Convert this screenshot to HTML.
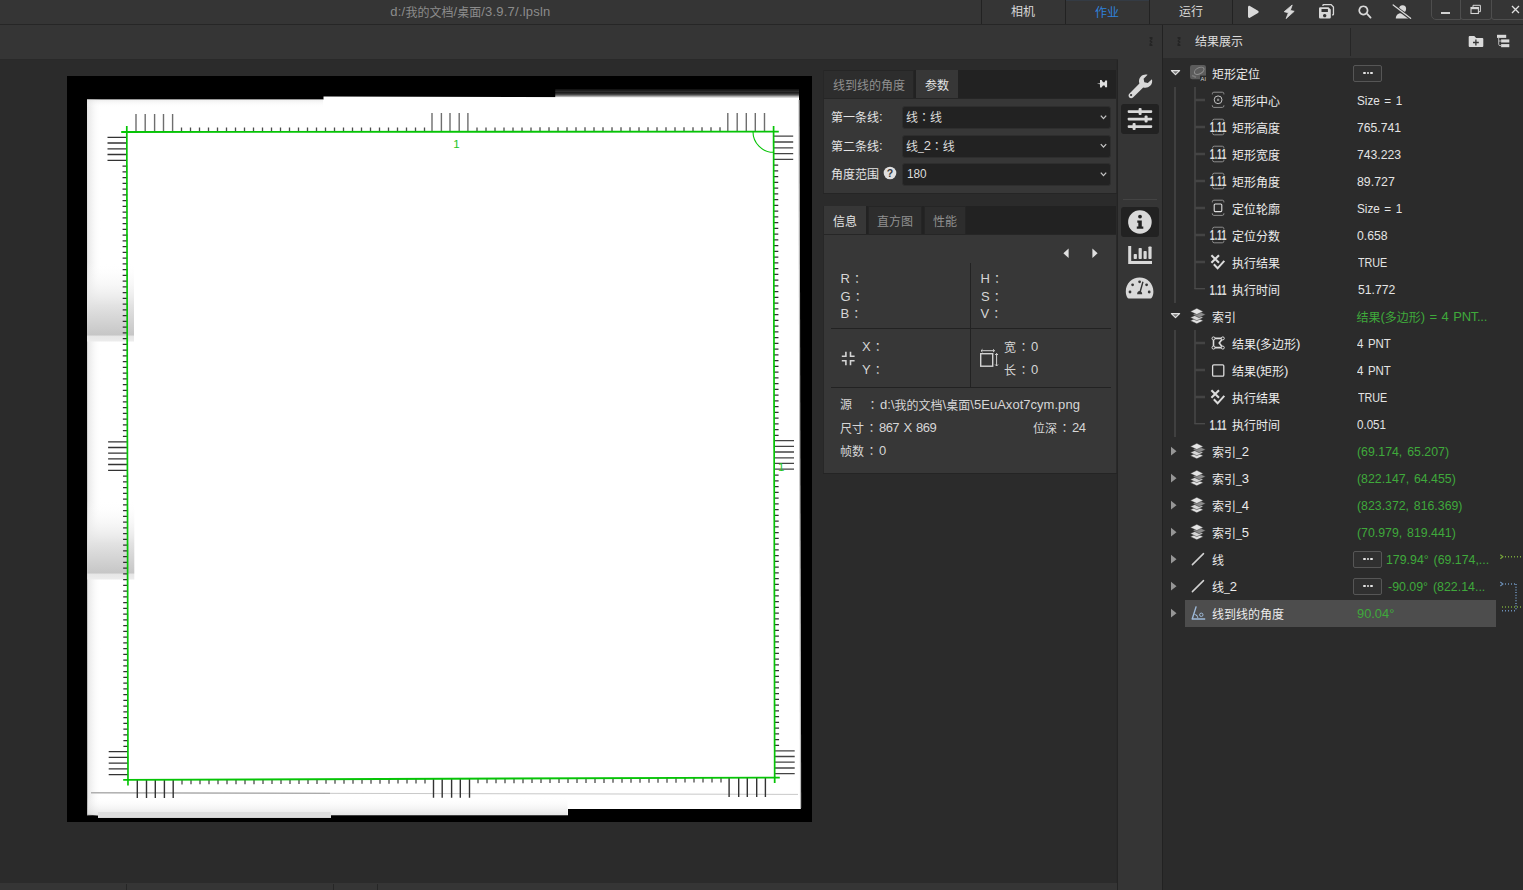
<!DOCTYPE html>
<html lang="zh-CN">
<head>
<meta charset="utf-8">
<title>线到线的角度</title>
<style>
*{box-sizing:border-box;margin:0;padding:0}
html,body{width:1523px;height:890px;overflow:hidden;background:#2b2b2b}
body{position:relative;font-family:"Liberation Sans","Noto Sans CJK SC",sans-serif;font-size:12px;color:#d6d6d6;line-height:16px}
.abs{position:absolute}
.l{font-size:13px;letter-spacing:-.45px;position:relative;top:-1px;word-spacing:1.500px}
.u{font-size:10.500px;letter-spacing:0;position:relative;top:1.200px}
.c{font-family:"Noto Sans CJK JP","Noto Sans CJK SC",sans-serif;margin:0 1.500px}
.t{position:absolute;white-space:nowrap;height:16px;line-height:16px}
#titlebar{left:0;top:0;width:1523px;height:24px;background:#353535}
#titleline{left:0;top:24px;width:1523px;height:1px;background:#262626}
#bar2{left:0;top:25px;width:1523px;height:34px;background:#353535}
#bar2line{left:0;top:59px;width:1118px;height:1px;background:#292929}
#sidebar{left:1118px;top:59px;width:44px;height:831px;background:#353535}
#rightpanel{left:1162px;top:25px;width:361px;height:865px;background:#2b2b2b;border-left:1px solid #222}
#rphead{left:1163px;top:25px;width:360px;height:33px;background:#353535}
#statusbar{left:0;top:883px;width:1117px;height:7px;background:#353535}
.sdiv{position:absolute;top:884px;width:1px;height:6px;background:#262626}
.tabbar{position:absolute;background:#222}
.panel{position:absolute;background:#373737}
.tab{position:absolute;height:28px;line-height:27px;text-align:center;color:#9a9a9a;background:#2d2d2d}
.tab.on{background:#373737;color:#e0e0e0}
.dd{position:absolute;left:902px;width:209px;height:23px;background:#222;border:1px solid #2e2e2e;border-radius:3px}
.hl{position:absolute;height:1px;background:#222}
.vl{position:absolute;width:1px;background:#222}
.nm{color:#ececec}
.vv{color:#e4e4e4}
.vv.g{color:#3fa93b}
.more{position:absolute;width:29px;height:17px;border:1px solid #565656;border-radius:2px;background:#303030}
.more i{position:absolute;top:5.800px;width:2.400px;height:2.400px;background:#e4e4e4;border-radius:1.200px}
.ico{position:absolute}
</style>
</head>
<body>
<!-- top bars -->
<div id="titlebar" class="abs"></div>
<div id="titleline" class="abs"></div>
<div id="bar2" class="abs"></div>
<div id="bar2line" class="abs"></div>
<div id="sidebar" class="abs"></div>
<div class="abs" style="left:1116px;top:60px;width:1px;height:823px;background:#292929"></div>
<div class="abs" style="left:1117px;top:60px;width:1px;height:830px;background:#242424"></div>
<div id="rightpanel" class="abs"></div>
<div id="rphead" class="abs"></div>
<div class="t" id="title" style="left:390.32px;top:5px;color:#8c8c8c"><span class="l" style="letter-spacing:0.212px">d:/</span>我的文档<span class="l" style="letter-spacing:0.212px">/</span>桌面<span class="l" style="letter-spacing:0.212px">/3.9.7/.lpsln</span></div>

<div class="vl" style="left:981px;top:0;height:24px"></div>
<div class="vl" style="left:1065px;top:0;height:24px"></div>
<div class="vl" style="left:1149px;top:0;height:24px"></div>
<div class="vl" style="left:1232px;top:0;height:24px"></div>
<div class="abs" style="left:1066px;top:0;width:83px;height:1px;background:#2f6fb5;opacity:.12"></div>
<div class="t" id="tt1" style="left:1011px;top:4.200px;color:#d8d8d8">相机</div>
<div class="t" id="tt2" style="left:1095px;top:5.200px;color:#2f82dc">作业</div>
<div class="t" id="tt3" style="left:1179px;top:4.200px;color:#d8d8d8">运行</div>
<!-- toolbar icons -->
<svg class="abs" style="left:1240px;top:0" width="180" height="24" viewBox="1240 0 180 24" fill="#d9d9d9">
  <!-- play -->
  <path d="M1248 7.2c0-1.1 1-1.7 1.9-1.2l8.1 4.8c.9.5.9 1.700 0 2.2l-8.1 4.800c-.9.500-1.900-.100-1.900-1.200z"/>
  <!-- bolt -->
  <path d="M1292.200 5l-8 6.700 4.200 1.100-2.300 5.800 8.100-7.300-3.900-.9z" stroke="#d9d9d9" stroke-width=".800" stroke-linejoin="round"/>
  <!-- save all -->
  <path d="M1320.300 7.300h8.200l2.300 2.300v7.700a1.300 1.300 0 0 1-1.300 1.300h-9.200a1.300 1.300 0 0 1-1.300-1.300v-8.700a1.300 1.300 0 0 1 1.300-1.300zm1.200 1.700v3.100h6.400v-3.100zm3.200 4.900a1.700 1.700 0 1 0 .01 0z" fill-rule="evenodd"/>
  <path d="M1322.300 5.900v-.5a1.300 1.300 0 0 1 1.300-1.300h7.800l2.700 2.700v7.500a1.300 1.300 0 0 1-1.300 1.300h-.7v-1.300h.7v-7l-2-2h-7.200v.6z"/>
  <!-- search -->
  <path d="M1363.400 5.400a5 5 0 1 0 .01 0zm0 1.700a3.300 3.300 0 1 1-.01 0z" fill-rule="evenodd"/>
  <path d="M1366.300 14.300l1.300-1.300 3.600 3.900a.9.900 0 0 1-1.300 1.300z"/>
  <!-- user slash -->
  <circle cx="1402.600" cy="8.700" r="3.500"/>
  <path d="M1395.800 18.600c0-3.200 2.200-5.300 4.800-5.300h3.600c2.600 0 4.800 2.100 4.800 5.300z"/>
  <path d="M1393.600 5.800l17 12.600" stroke="#353535" stroke-width="3.200" fill="none"/>
  <path d="M1393.200 5l17.400 13.300" stroke="#d9d9d9" stroke-width="1.300" fill="none" stroke-linecap="round"/>
</svg>
<!-- window controls -->
<div class="abs" style="left:1431px;top:-6px;width:30px;height:26px;border:1px solid #4e4e4e;border-radius:0 0 0 5px"></div>
<div class="abs" style="left:1460px;top:-6px;width:32px;height:26px;border:1px solid #4e4e4e;border-radius:0 0 3px 3px"></div>
<div class="abs" style="left:1491px;top:-6px;width:40px;height:26px;border:1px solid #4e4e4e;border-radius:0 0 0 3px"></div>
<div class="abs" style="left:1441px;top:12px;width:9px;height:2px;background:#d2d2d2"></div>
<svg class="abs" style="left:1468px;top:3px" width="16" height="14" viewBox="1468 3 16 14" fill="none" stroke="#d6d6d6">
  <path d="M1473 7v-1.700h7.400v6.400h-1.700" stroke-width="1"/>
  <rect x="1471" y="7.500" width="7.400" height="6" stroke-width="1.100"/>
  <rect x="1471" y="7" width="7.400" height="2.200" fill="#d6d6d6" stroke="none"/>
</svg>
<svg class="abs" style="left:1508px;top:3px" width="15" height="14" viewBox="1508 3 15 14" fill="none" stroke="#e0e0e0" stroke-width="1.300">
  <path d="M1512 6l7 7M1519 6l-7 7"/>
</svg>
<!-- second bar bits -->
<svg class="abs" style="left:1146px;top:34px" width="40" height="16" viewBox="1146 34 40 16" fill="#222">
  <path d="M1149.500 37h3v2.200l-1.700 1.300 1.700 1.300v.4l-1.700 1.300 1.700 1.300v1.200h-3v-2.200l1.400-1.300-1.400-1.300v-.4l1.400-1.300-1.400-1.300z" opacity=".9"/>
  <path d="M1177.500 37h3v2.200l-1.700 1.300 1.700 1.300v.4l-1.700 1.300 1.700 1.300v1.200h-3v-2.200l1.400-1.300-1.400-1.300v-.4l1.400-1.300-1.400-1.300z" opacity=".9"/>
</svg>
<div class="t" id="rphd" style="left:1195px;top:33.500px;color:#dcdcdc;z-index:5">结果展示</div>


<!-- image view -->
<svg class="abs" style="left:0;top:60px" width="1117" height="823" viewBox="0 60 1117 823">
<defs>
<linearGradient id="gp" x1="0" y1="0" x2="0" y2="1"><stop offset="0" stop-color="#fff" stop-opacity="0"/><stop offset="0.55" stop-color="#e2e2e2"/><stop offset="0.92" stop-color="#c6c6c6"/><stop offset="0.93" stop-color="#e6e6e6"/><stop offset="1" stop-color="#ececec"/></linearGradient>
<linearGradient id="gl" x1="0" y1="0" x2="1" y2="0"><stop offset="0" stop-color="#d8d8d8"/><stop offset="1" stop-color="#fff" stop-opacity="0"/></linearGradient>
<linearGradient id="gb" x1="0" y1="0" x2="0" y2="1"><stop offset="0" stop-color="#fff" stop-opacity="0"/><stop offset="1" stop-color="#cfcfcf"/></linearGradient>
<linearGradient id="gt" x1="0" y1="0" x2="0" y2="1"><stop offset="0" stop-color="#dcdcdc"/><stop offset="1" stop-color="#fff" stop-opacity="0"/></linearGradient>
</defs>
<rect x="67" y="76" width="745" height="746" fill="#000"/>
<rect x="555.3" y="89.3" width="243.7" height="9" fill="#1d1d1d"/>
<rect x="555.3" y="90.8" width="243.7" height="1.2" fill="#2c2c2c"/>
<rect x="555.3" y="93.6" width="243.7" height="1.6" fill="#484848"/>
<rect x="555.3" y="95.2" width="243.7" height="1.3" fill="#8a8a8a"/>
<rect x="555.3" y="96.3" width="243.7" height="1.5" fill="#d8d8d8"/>
<polygon points="87,99.5 323.5,99.5 323.5,96.6 799,97.6 800.8,809 568,809 568,815.3 331,815.3 331,817.7 98,817.7 98,815.5 87.6,814.5" fill="#fff"/>
<rect x="87" y="99.5" width="14" height="716" fill="url(#gl)" opacity="0.7"/>
<rect x="87" y="99.5" width="236" height="8" fill="url(#gt)" opacity="0.5"/>
<rect x="87.5" y="797" width="480" height="18" fill="url(#gb)" opacity="0.55"/>
<rect x="98" y="812" width="233" height="5.7" fill="#dedede"/>
<rect x="87" y="262" width="47" height="79.5" fill="url(#gp)"/>
<rect x="87.3" y="500" width="47" height="79.5" fill="url(#gp)"/>
<line x1="91" y1="792.8" x2="798" y2="794.4" stroke="#c9c9c9" stroke-width="1"/>
<line x1="91" y1="792.8" x2="330" y2="793.3" stroke="#9f9f9f" stroke-width="1"/>
<line x1="799" y1="100" x2="800.6" y2="808" stroke="#bdbdbd" stroke-width="1.2"/>
<path d="M181.50 131.70v-4.30M190.50 131.70v-4.30M199.50 131.70v-4.30M208.50 131.70v-4.30M217.50 131.70v-4.30M226.50 131.70v-4.30M235.50 131.70v-4.30M244.50 131.70v-4.30M253.50 131.70v-4.30M262.50 131.70v-4.30M271.50 131.70v-4.30M280.50 131.70v-4.30M289.50 131.70v-4.30M298.50 131.70v-4.30M307.50 131.70v-4.30M316.50 131.70v-4.30M325.50 131.70v-4.30M334.50 131.70v-4.30M343.50 131.70v-4.30M352.50 131.70v-4.30M361.50 131.70v-4.30M370.50 131.70v-4.30M379.50 131.70v-4.30M388.50 131.70v-4.30M397.50 131.70v-4.30M406.50 131.70v-4.30M415.50 131.70v-4.30M424.50 131.70v-4.30" stroke="#3a3a3a" stroke-width="1.3" fill="none" opacity="0.9"/>
<path d="M477.00 131.70v-4.30M486.00 131.70v-4.30M495.00 131.69v-4.30M504.00 131.69v-4.30M513.00 131.69v-4.30M522.00 131.68v-4.30M531.00 131.68v-4.30M540.00 131.67v-4.30M549.00 131.67v-4.30M558.00 131.67v-4.30M567.00 131.66v-4.30M576.00 131.66v-4.30M585.00 131.66v-4.30M594.00 131.65v-4.30M603.00 131.65v-4.30M612.00 131.64v-4.30M621.00 131.64v-4.30M630.00 131.64v-4.30M639.00 131.63v-4.30M648.00 131.63v-4.30M657.00 131.63v-4.30M666.00 131.62v-4.30M675.00 131.62v-4.30M684.00 131.61v-4.30M693.00 131.61v-4.30M702.00 131.61v-4.30M711.00 131.60v-4.30M720.00 131.60v-4.30" stroke="#3a3a3a" stroke-width="1.3" fill="none" opacity="0.9"/>
<path d="M182.00 779.60v4.80M191.00 779.57v4.80M200.00 779.53v4.80M209.00 779.50v4.80M218.00 779.47v4.80M227.00 779.43v4.80M236.00 779.40v4.80M245.00 779.37v4.80M254.00 779.33v4.80M263.00 779.30v4.80M272.00 779.27v4.80M281.00 779.23v4.80M290.00 779.20v4.80M299.00 779.17v4.80M308.00 779.13v4.80M317.00 779.10v4.80M326.00 779.07v4.80M335.00 779.03v4.80M344.00 779.00v4.80M353.00 778.97v4.80M362.00 778.93v4.80M371.00 778.90v4.80M380.00 778.87v4.80M389.00 778.83v4.80M398.00 778.80v4.80M407.00 778.77v4.80M416.00 778.73v4.80M425.00 778.70v4.80" stroke="#3a3a3a" stroke-width="1.3" fill="none" opacity="0.9"/>
<path d="M478.00 778.50v4.80M487.00 778.47v4.80M496.00 778.44v4.80M505.00 778.41v4.80M514.00 778.38v4.80M523.00 778.35v4.80M532.00 778.32v4.80M541.00 778.29v4.80M550.00 778.26v4.80M559.00 778.23v4.80M568.00 778.20v4.80M577.00 778.17v4.80M586.00 778.14v4.80M595.00 778.11v4.80M604.00 778.09v4.80M613.00 778.06v4.80M622.00 778.03v4.80M631.00 778.00v4.80M640.00 777.97v4.80M649.00 777.94v4.80M658.00 777.91v4.80M667.00 777.88v4.80M676.00 777.85v4.80M685.00 777.82v4.80M694.00 777.79v4.80M703.00 777.76v4.80M712.00 777.73v4.80M721.00 777.70v4.80" stroke="#3a3a3a" stroke-width="1.3" fill="none" opacity="0.9"/>
<path d="M127.10 166.00h-4.60M127.11 171.75h-4.60M127.12 177.50h-4.60M127.13 183.25h-4.60M127.13 189.00h-4.60M127.14 194.75h-4.60M127.15 200.50h-4.60M127.16 206.25h-4.60M127.17 212.00h-4.60M127.18 217.75h-4.60M127.19 223.50h-4.60M127.19 229.25h-4.60M127.20 235.00h-4.60M127.21 240.75h-4.60M127.22 246.50h-4.60M127.23 252.25h-4.60M127.24 258.00h-4.60M127.24 263.75h-4.60M127.25 269.50h-4.60M127.26 275.25h-4.60M127.27 281.00h-4.60M127.28 286.75h-4.60M127.29 292.50h-4.60M127.30 298.25h-4.60M127.30 304.00h-4.60M127.31 309.75h-4.60M127.32 315.50h-4.60M127.33 321.25h-4.60M127.34 327.00h-4.60M127.35 332.75h-4.60M127.36 338.50h-4.60M127.36 344.25h-4.60M127.37 350.00h-4.60M127.38 355.75h-4.60M127.39 361.50h-4.60M127.40 367.25h-4.60M127.41 373.00h-4.60M127.42 378.75h-4.60M127.42 384.50h-4.60M127.43 390.25h-4.60M127.44 396.00h-4.60M127.45 401.75h-4.60M127.46 407.50h-4.60M127.47 413.25h-4.60M127.47 419.00h-4.60M127.48 424.75h-4.60M127.49 430.50h-4.60M127.50 436.25h-4.60" stroke="#262626" stroke-width="1.25" fill="none" opacity="0.95"/>
<path d="M127.60 476.00h-4.60M127.61 481.75h-4.60M127.62 487.50h-4.60M127.63 493.25h-4.60M127.63 499.00h-4.60M127.64 504.75h-4.60M127.65 510.50h-4.60M127.66 516.25h-4.60M127.67 522.00h-4.60M127.68 527.75h-4.60M127.69 533.50h-4.60M127.69 539.25h-4.60M127.70 545.00h-4.60M127.71 550.75h-4.60M127.72 556.50h-4.60M127.73 562.25h-4.60M127.74 568.00h-4.60M127.74 573.75h-4.60M127.75 579.50h-4.60M127.76 585.25h-4.60M127.77 591.00h-4.60M127.78 596.75h-4.60M127.79 602.50h-4.60M127.80 608.25h-4.60M127.80 614.00h-4.60M127.81 619.75h-4.60M127.82 625.50h-4.60M127.83 631.25h-4.60M127.84 637.00h-4.60M127.85 642.75h-4.60M127.86 648.50h-4.60M127.86 654.25h-4.60M127.87 660.00h-4.60M127.88 665.75h-4.60M127.89 671.50h-4.60M127.90 677.25h-4.60M127.91 683.00h-4.60M127.92 688.75h-4.60M127.92 694.50h-4.60M127.93 700.25h-4.60M127.94 706.00h-4.60M127.95 711.75h-4.60M127.96 717.50h-4.60M127.97 723.25h-4.60M127.97 729.00h-4.60M127.98 734.75h-4.60M127.99 740.50h-4.60M128.00 746.25h-4.60" stroke="#262626" stroke-width="1.25" fill="none" opacity="0.95"/>
<path d="M773.60 165.00h4.60M773.61 170.75h4.60M773.62 176.50h4.60M773.63 182.25h4.60M773.63 188.00h4.60M773.64 193.75h4.60M773.65 199.50h4.60M773.66 205.25h4.60M773.67 211.00h4.60M773.68 216.75h4.60M773.69 222.50h4.60M773.69 228.25h4.60M773.70 234.00h4.60M773.71 239.75h4.60M773.72 245.50h4.60M773.73 251.25h4.60M773.74 257.00h4.60M773.74 262.75h4.60M773.75 268.50h4.60M773.76 274.25h4.60M773.77 280.00h4.60M773.78 285.75h4.60M773.79 291.50h4.60M773.80 297.25h4.60M773.80 303.00h4.60M773.81 308.75h4.60M773.82 314.50h4.60M773.83 320.25h4.60M773.84 326.00h4.60M773.85 331.75h4.60M773.86 337.50h4.60M773.86 343.25h4.60M773.87 349.00h4.60M773.88 354.75h4.60M773.89 360.50h4.60M773.90 366.25h4.60M773.91 372.00h4.60M773.92 377.75h4.60M773.92 383.50h4.60M773.93 389.25h4.60M773.94 395.00h4.60M773.95 400.75h4.60M773.96 406.50h4.60M773.97 412.25h4.60M773.97 418.00h4.60M773.98 423.75h4.60M773.99 429.50h4.60M774.00 435.25h4.60" stroke="#262626" stroke-width="1.25" fill="none" opacity="0.95"/>
<path d="M774.00 475.00h4.60M774.01 480.75h4.60M774.02 486.50h4.60M774.03 492.25h4.60M774.04 498.00h4.60M774.05 503.75h4.60M774.06 509.50h4.60M774.07 515.25h4.60M774.09 521.00h4.60M774.10 526.75h4.60M774.11 532.50h4.60M774.12 538.25h4.60M774.13 544.00h4.60M774.14 549.75h4.60M774.15 555.50h4.60M774.16 561.25h4.60M774.17 567.00h4.60M774.18 572.75h4.60M774.19 578.50h4.60M774.20 584.25h4.60M774.21 590.00h4.60M774.22 595.75h4.60M774.23 601.50h4.60M774.24 607.25h4.60M774.26 613.00h4.60M774.27 618.75h4.60M774.28 624.50h4.60M774.29 630.25h4.60M774.30 636.00h4.60M774.31 641.75h4.60M774.32 647.50h4.60M774.33 653.25h4.60M774.34 659.00h4.60M774.35 664.75h4.60M774.36 670.50h4.60M774.37 676.25h4.60M774.38 682.00h4.60M774.39 687.75h4.60M774.40 693.50h4.60M774.42 699.25h4.60M774.43 705.00h4.60M774.44 710.75h4.60M774.45 716.50h4.60M774.46 722.25h4.60M774.47 728.00h4.60M774.48 733.75h4.60M774.49 739.50h4.60M774.50 745.25h4.60" stroke="#262626" stroke-width="1.25" fill="none" opacity="0.95"/>
<path d="M136.0 114.0V131.5M145.2 114.0V131.5M154.6 114.0V131.5M163.5 114.0V131.5M172.6 114.0V131.5" stroke="#6e6e6e" stroke-width="1.4" fill="none"/>
<path d="M432.0 113.0V131.5M441.4 113.0V131.5M450.0 113.0V131.5M459.2 113.0V131.5M467.9 113.0V131.5" stroke="#6e6e6e" stroke-width="1.4" fill="none"/>
<path d="M727.8 113.0V131.5M737.2 113.0V131.5M746.3 113.0V131.5M755.3 113.0V131.5M764.5 113.0V131.5" stroke="#6e6e6e" stroke-width="1.4" fill="none"/>
<path d="M137.3 780.0V798.0M146.5 780.0V798.0M155.3 780.0V798.0M164.4 780.0V798.0M173.2 780.0V798.0" stroke="#333" stroke-width="1.4" fill="none"/>
<path d="M433.5 779.0V797.7M442.2 779.0V797.7M451.6 779.0V797.7M460.3 779.0V797.7M469.5 779.0V797.7" stroke="#333" stroke-width="1.4" fill="none"/>
<path d="M729.1 778.0V797.0M738.7 778.0V797.0M747.3 778.0V797.0M756.7 778.0V797.0M765.4 778.0V797.0" stroke="#333" stroke-width="1.4" fill="none"/>
<path d="M107.5 137.3H127.0M107.5 143.0H127.0M107.5 148.8H127.0M107.5 154.5H127.0M107.5 160.3H127.0" stroke="#333" stroke-width="1.3" fill="none"/>
<path d="M108.1 441.8H127.5M108.1 447.5H127.5M108.1 453.1H127.5M108.1 458.9H127.5M108.1 464.5H127.5M108.1 470.3H127.5" stroke="#333" stroke-width="1.3" fill="none"/>
<path d="M108.7 751.7H128.0M108.7 757.4H128.0M108.7 763.2H128.0M108.7 768.9H128.0M108.7 774.6H128.0" stroke="#333" stroke-width="1.3" fill="none"/>
<path d="M773.5 136.2H793.2M773.5 142.0H793.2M773.5 147.8H793.2M773.5 153.6H793.2M773.5 159.4H793.2" stroke="#444" stroke-width="1.3" fill="none"/>
<path d="M774.0 440.6H794.0M774.0 446.3H794.0M774.0 452.0H794.0M774.0 457.8H794.0M774.0 463.4H794.0M774.0 469.2H794.0" stroke="#444" stroke-width="1.3" fill="none"/>
<path d="M775.0 750.8H794.7M775.0 756.5H794.7M775.0 762.2H794.7M775.0 768.0H794.7M775.0 773.7H794.7" stroke="#444" stroke-width="1.3" fill="none"/>
<g stroke="#06c406" stroke-width="1.9" fill="none">
<line x1="121.2" y1="132" x2="778.8" y2="131.6"/>
<line x1="773.6" y1="125.9" x2="774.7" y2="783" stroke-width="1.7"/>
<line x1="779.8" y1="777.6" x2="123.2" y2="779.9"/>
<line x1="128" y1="785.5" x2="126.8" y2="126.1" stroke-width="1.7"/>
<path d="M753 131.6A20.5 20.5 0 0 0 773.5 152.3" stroke-width="1.1"/>
</g>
<text x="453.3" y="148" font-family="Liberation Sans, sans-serif" font-size="11.5" fill="#22c322">1</text>
<text x="778" y="470.6" font-family="Liberation Sans, sans-serif" font-size="11.5" fill="#22c322">1</text>
</svg>

<!-- params panel -->
<div class="tabbar" style="left:823px;top:70px;width:293px;height:29px"></div>
<div class="tab" style="left:823px;top:70px;width:91px;border:1px solid #252525;border-bottom:0"></div>
<div class="tab on" style="left:916px;top:70px;width:42px;height:29px"></div>
<div class="t" id="pt1" style="left:833px;top:77.500px;color:#909090">线到线的角度</div>
<div class="t" id="pt2" style="left:925px;top:77.500px;color:#e4e4e4">参数</div>
<svg class="abs" style="left:1094px;top:76px" width="16" height="16" viewBox="1094 76 16 16" fill="#e0e0e0">
  <path d="M1096.900 83.700l3.100-.500v-3.200h1.600l1.400 2.200h1.600l.6-1.700h1.900v6.800h-1.900l-.6-1.900h-1.600l-1.400 2.100h-1.600v-3.300z"/>
</svg>
<div class="panel" style="left:823px;top:98px;width:293px;height:95px;border-top:1px solid #262626"></div>
<div class="abs" style="left:823px;top:70px;width:1px;height:123px;background:#272727"></div>
<div class="abs" style="left:823px;top:193px;width:294px;height:1px;background:#252525"></div>
<div class="t" id="pl1" style="left:831px;top:109.500px;color:#e4e4e4">第一条线<span class="l">:</span></div>
<div class="t" id="pl2" style="left:831px;top:138.500px;color:#e4e4e4">第二条线<span class="l">:</span></div>
<div class="t" id="pl3" style="left:831px;top:166.500px;color:#e4e4e4">角度范围</div>
<svg class="abs" style="left:882.500px;top:166px" width="14" height="14" viewBox="0 0 14 14">
  <circle cx="7" cy="7" r="6.300" fill="#e0e0e0"/>
  <text x="7" y="10.700" text-anchor="middle" font-family="Liberation Sans, sans-serif" font-weight="bold" font-size="10.500" fill="#383838">?</text>
</svg>
<div class="dd" style="top:106px"></div>
<div class="dd" style="top:134.500px"></div>
<div class="dd" style="top:163px"></div>
<svg class="abs" style="left:1099px;top:110px" width="10" height="70" viewBox="0 0 10 70" fill="none" stroke="#c4c4c4" stroke-width="1.300">
  <path d="M1.800 5.600l2.700 3 2.700-3M1.800 34.100l2.700 3 2.700-3M1.800 62.600l2.700 3 2.700-3"/>
</svg>
<div class="t" id="pd1" style="left:906px;top:109px;color:#dcdcdc">线<span class="c" lang="ja" style="margin:0">：</span>线</div>
<div class="t" id="pd2" style="left:906px;top:138px;color:#dcdcdc">线<span class="l"><span class="u">_</span>2</span><span class="c" lang="ja" style="margin:0">：</span>线</div>
<div class="t" id="pd3" style="left:906.58px;top:166.500px;color:#dcdcdc;transform:scaleX(0.907);transform-origin:0 0"><span class="l" style="letter-spacing:0px">180</span></div>


<!-- info panel -->
<div class="tabbar" style="left:823px;top:206px;width:293px;height:29px"></div>
<div class="tab on" style="left:823px;top:206px;width:43px;height:29px"></div>
<div class="tab" style="left:868px;top:206px;width:54px;border:1px solid #252525;border-bottom:0"></div>
<div class="tab" style="left:924px;top:206px;width:42px;border:1px solid #252525;border-bottom:0"></div>
<div class="t" id="it1" style="left:833px;top:213.500px;color:#e4e4e4">信息</div>
<div class="t" id="it2" style="left:877px;top:213.500px;color:#909090">直方图</div>
<div class="t" id="it3" style="left:933px;top:213.500px;color:#909090">性能</div>
<div class="panel" style="left:823px;top:234px;width:293px;height:239px;border-top:1px solid #262626"></div>
<div class="abs" style="left:823px;top:206px;width:1px;height:267px;background:#272727"></div>
<div class="abs" style="left:823px;top:473px;width:294px;height:1px;background:#242424"></div>
<svg class="abs" style="left:1060px;top:246px" width="42" height="14" viewBox="1060 246 42 14" fill="#e0e0e0">
  <path d="M1068.600 248.600v9.400l-5.200-4.700z"/><path d="M1092.400 248.600v9.400l5.200-4.700z"/>
</svg>
<div class="vl" style="left:970px;top:263px;height:124px"></div>
<div class="hl" style="left:831px;top:328px;width:280px"></div>
<div class="hl" style="left:831px;top:387px;width:280px"></div>
<div class="t" id="iR" style="left:840.500px;top:270.500px"><span class="l">R</span><span class="c" lang="ja">：</span></div>
<div class="t" id="iG" style="left:840.500px;top:288.500px"><span class="l">G</span><span class="c" lang="ja">：</span></div>
<div class="t" id="iB" style="left:840.500px;top:306px"><span class="l">B</span><span class="c" lang="ja">：</span></div>
<div class="t" id="iH" style="left:980.500px;top:270.500px"><span class="l">H</span><span class="c" lang="ja">：</span></div>
<div class="t" id="iS" style="left:981px;top:288.500px"><span class="l">S</span><span class="c" lang="ja">：</span></div>
<div class="t" id="iV" style="left:980.500px;top:306px"><span class="l">V</span><span class="c" lang="ja">：</span></div>
<svg class="abs" style="left:840px;top:350px" width="16" height="16" viewBox="0 0 16 16" fill="none" stroke="#d4d4d4" stroke-width="1.600">
  <path d="M1.800 6.200h4.100v-4.500M14.600 6.200h-4.100v-4.500M1.800 10.800h4.100v4.500M14.600 10.800h-4.100v4.500"/>
</svg>
<svg class="abs" style="left:978px;top:347px" width="22" height="22" viewBox="0 0 22 22" fill="none" stroke="#d4d4d4">
  <rect x="2.700" y="6.700" width="12" height="12.500" stroke-width="1.400"/>
  <path d="M3 3.700h13.500M4.500 2.300l-1.500 1.400 1.500 1.400M15 2.300l1.500 1.400-1.500 1.400M18.600 6.500v12.500M17.200 8l1.400-1.500 1.400 1.500M17.200 17.500l1.400 1.500 1.400-1.500" stroke-width="1"/>
</svg>
<div class="t" id="iX" style="left:862px;top:339px"><span class="l">X</span><span class="c" lang="ja">：</span></div>
<div class="t" id="iY" style="left:862px;top:361.500px"><span class="l">Y</span><span class="c" lang="ja">：</span></div>
<div class="t" id="iW" style="left:1004px;top:339px">宽<span class="c" lang="ja">：</span><span class="l">0</span></div>
<div class="t" id="iL" style="left:1004px;top:361.500px">长<span class="c" lang="ja">：</span><span class="l">0</span></div>
<div class="t" id="iSrc" style="left:840px;top:397.300px">源</div>
<div class="t" id="iSrc2" style="left:865px;top:397.300px"><span class="c" lang="ja">：</span><span class="l" style="letter-spacing:0.033px">d:\</span>我的文档<span class="l" style="letter-spacing:0.033px">\</span>桌面<span class="l" style="letter-spacing:0.033px">\5EuAxot7cym.png</span></div>
<div class="t" id="iSz" style="left:840px;top:419.500px">尺寸<span class="c" lang="ja">：</span><span class="l" style="letter-spacing:-0.587px">867 X 869</span></div>
<div class="t" id="iDp" style="left:1033px;top:419.500px">位深<span class="c" lang="ja">：</span><span class="l">24</span></div>
<div class="t" id="iFr" style="left:840px;top:442.500px">帧数<span class="c" lang="ja">：</span><span class="l">0</span></div>


<!-- sidebar -->
<div class="abs" style="left:1121px;top:104px;width:38px;height:30px;background:#222;border-radius:3px"></div>
<div class="abs" style="left:1121px;top:207px;width:38px;height:30px;background:#222;border-radius:3px"></div>
<div class="abs" style="left:1123px;top:199px;width:34px;height:1px;background:#444"></div>
<svg class="abs" style="left:1118px;top:64px" width="44" height="240" viewBox="1118 64 44 240" fill="#d9d9d9">
  <!-- wrench -->
  <path d="M1151.900 79.200c.7 2.300.1 4.800-1.700 6.600-1.900 1.900-4.600 2.400-7 1.600l-10.200 10c-1 1-2.700 1-3.700 0s-1-2.700 0-3.700l10.100-10.100c-.9-2.400-.4-5.200 1.500-7.100 1.800-1.800 4.400-2.400 6.700-1.700l-4 4 .7 3.500 3.500.7z"/>
  <circle cx="1131.100" cy="95.100" r="1.100" fill="#353535"/>
  <!-- sliders -->
  <rect x="1127.700" y="110.200" width="24.500" height="2.700" rx=".8"/>
  <rect x="1127.700" y="117.700" width="24.500" height="2.700" rx=".8"/>
  <rect x="1127.700" y="125.200" width="24.500" height="2.700" rx=".8"/>
  <rect x="1138.600" y="108" width="3" height="7.100" rx="1"/>
  <rect x="1144.600" y="115.500" width="3" height="7.100" rx="1"/>
  <rect x="1132.600" y="123" width="3" height="7.100" rx="1"/>
  <!-- info -->
  <circle cx="1139.900" cy="222" r="11.800"/>
  <circle cx="1140" cy="216.600" r="1.900" fill="#222"/>
  <path d="M1137.300 220.400h4.500v6h1.500v2.400h-6.500v-2.400h1.500v-3.600h-1z" fill="#222"/>
  <!-- chart -->
  <path d="M1128.200 246h3v15h20.800v3h-23.800z"/>
  <rect x="1133.700" y="254" width="3.200" height="5" rx=".8"/>
  <rect x="1138.600" y="248" width="3.200" height="11" rx=".8"/>
  <rect x="1143.500" y="251" width="3.200" height="8" rx=".8"/>
  <rect x="1148.400" y="246.500" width="3.200" height="12.500" rx=".8"/>
  <!-- gauge -->
  <path d="M1139.600 277.600c7.600 0 13.800 6.200 13.800 13.800 0 2.200-.5 4.300-1.500 6.200-.3.600-.9.900-1.500.9h-21.600c-.6 0-1.200-.3-1.500-.9-1-1.900-1.500-4-1.500-6.200 0-7.600 6.200-13.800 13.800-13.800z"/>
  <g fill="#353535">
    <circle cx="1139.600" cy="281.800" r="1.400"/>
    <circle cx="1132.600" cy="284.800" r="1.400"/>
    <circle cx="1146.600" cy="284.800" r="1.400"/>
    <circle cx="1130" cy="292" r="1.400"/>
    <circle cx="1149.200" cy="292" r="1.400"/>
    <path d="M1142.300 281.600l1.300.4-2.600 9.600c.9.600 1.400 1.600 1.100 2.700h-4.900c-.3-1.600.8-3 2.400-3.200z"/>
  </g>
</svg>


<!-- right panel -->
<svg class="abs" style="left:1460px;top:30px" width="60" height="24" viewBox="1460 30 60 24" fill="#dadada">
<path d="M1469.700 36h4.600l1.800 1.900h6.200a1 1 0 0 1 1 1v7.100a1 1 0 0 1-1 1h-12.600a1 1 0 0 1-1-1v-9a1 1 0 0 1 1-1z"/>
<path d="M1475.900 39.600v5.800M1473 42.500h5.800" stroke="#353535" stroke-width="1.300" fill="none"/>
<rect x="1497" y="34.800" width="9.200" height="3.100"/>
<rect x="1501.100" y="39.400" width="8.200" height="3.100"/>
<rect x="1501.100" y="44.100" width="8.200" height="3.100"/>
<path d="M1498.700 37.500v6.800q0 1.300 1.300 1.300h1.400M1498.700 41h2.700" stroke="#b4b4b4" stroke-width="1" fill="none"/>
</svg>
<div class="vl" style="left:1350px;top:28px;height:28px;background:#262626"></div>
<div class="abs" style="left:1185px;top:600px;width:311px;height:27px;background:#4d4d4d"></div>
<svg class="abs" style="left:1164px;top:58px" width="359" height="600" viewBox="1164 58 359 600" fill="none">
<path d="M1175 87V303M1175 330V437" stroke="#404040" stroke-width="2"/>
<path d="M1195 87 V289.0" stroke="#404040" stroke-width="2"/><path d="M1195 100 H1205M1195 127 H1205M1195 154 H1205M1195 181 H1205M1195 208 H1205M1195 235 H1205M1195 262 H1205" stroke="#444" stroke-width="2.400"/><path d="M1194.500 288.7 H1205" stroke="#4a4a4a" stroke-width="1.400"/>
<path d="M1195 330 V424.0" stroke="#404040" stroke-width="2"/><path d="M1195 343 H1205M1195 370 H1205M1195 397 H1205" stroke="#444" stroke-width="2.400"/><path d="M1194.500 423.7 H1205" stroke="#4a4a4a" stroke-width="1.400"/>
<path d="M1171.400 70.6h8.200l-4.100 4.100z" fill="#777" stroke="#e2e2e2" stroke-width="1.200" stroke-linejoin="round"/>
<path d="M1171.400 313.6h8.200l-4.100 4.100z" fill="#777" stroke="#e2e2e2" stroke-width="1.200" stroke-linejoin="round"/>
<path d="M1171 446.8v8.800l5.500-4.400z" fill="#969696"/>
<path d="M1171 473.8v8.800l5.500-4.400z" fill="#969696"/>
<path d="M1171 500.8v8.800l5.500-4.400z" fill="#969696"/>
<path d="M1171 527.8v8.800l5.500-4.400z" fill="#969696"/>
<path d="M1171 554.8v8.800l5.500-4.400z" fill="#969696"/>
<path d="M1171 581.8v8.800l5.500-4.400z" fill="#969696"/>
<path d="M1171 608.8v8.800l5.500-4.400z" fill="#969696"/>
<rect x="1190" y="65.1" width="16" height="14.200" rx="2.200" fill="#5c5c5c"/><ellipse cx="1199.200" cy="70.8" rx="5.200" ry="3" transform="rotate(-28 1199.200 70.8)" stroke="#8f8f8f" stroke-width="1"/><path d="M1192 75.6l4 1.600" stroke="#7a7a7a" stroke-width="1.600"/><rect x="1200" y="75.6" width="7" height="6" fill="#2b2b2b"/><text x="1200.600" y="81.2" font-family="Liberation Sans, sans-serif" font-size="6.200" fill="#d8d8d8" stroke="none" textLength="5.400" lengthAdjust="spacingAndGlyphs">AI</text>
<path d="M1212.3 94.4v-.600q0 -1.600 1.600 -1.600h8.4q1.600 0 1.600 1.600v.600" stroke="#8e8e8e" stroke-width="1"/><path d="M1212.3 105.2v.600q0 1.600 1.600 1.600h8.4q1.600 0 1.600 -1.600v-.600" stroke="#8e8e8e" stroke-width="1"/><circle cx="1218.100" cy="99.8" r="3.900" stroke="#c4c4c4" stroke-width="1"/><rect x="1217" y="98.7" width="2.200" height="2.200" fill="#8a8a8a"/>
<path d="M1212.6 121.4v-.600q0 -1.600 1.600 -1.600h8.1q1.600 0 1.600 1.600v.600" stroke="#8e8e8e" stroke-width="1"/><path d="M1212.6 132.6v.600q0 1.600 1.600 1.600h8.1q1.600 0 1.600 -1.600v-.600" stroke="#8e8e8e" stroke-width="1"/><text x="1209.700" y="132.3" font-family="Liberation Sans, sans-serif" font-weight="bold" font-size="14.500" fill="#dcdcdc" textLength="16.800" lengthAdjust="spacingAndGlyphs">1.11</text>
<path d="M1212.6 148.4v-.600q0 -1.600 1.600 -1.600h8.1q1.600 0 1.600 1.600v.600" stroke="#8e8e8e" stroke-width="1"/><path d="M1212.6 159.6v.600q0 1.600 1.600 1.600h8.1q1.600 0 1.600 -1.600v-.600" stroke="#8e8e8e" stroke-width="1"/><text x="1209.700" y="159.3" font-family="Liberation Sans, sans-serif" font-weight="bold" font-size="14.500" fill="#dcdcdc" textLength="16.800" lengthAdjust="spacingAndGlyphs">1.11</text>
<path d="M1212.6 175.4v-.600q0 -1.600 1.600 -1.600h8.1q1.600 0 1.600 1.600v.600" stroke="#8e8e8e" stroke-width="1"/><path d="M1212.6 186.6v.600q0 1.600 1.600 1.600h8.1q1.600 0 1.600 -1.600v-.600" stroke="#8e8e8e" stroke-width="1"/><text x="1209.700" y="186.3" font-family="Liberation Sans, sans-serif" font-weight="bold" font-size="14.500" fill="#dcdcdc" textLength="16.800" lengthAdjust="spacingAndGlyphs">1.11</text>
<path d="M1212.3 202.4v-.600q0 -1.600 1.600 -1.600h8.4q1.600 0 1.600 1.600v.600" stroke="#8e8e8e" stroke-width="1"/><path d="M1212.3 213.2v.600q0 1.600 1.600 1.600h8.4q1.600 0 1.600 -1.600v-.600" stroke="#8e8e8e" stroke-width="1"/><rect x="1214.200" y="204.0" width="7.600" height="7.600" rx="1" stroke="#dcdcdc" stroke-width="1.100"/>
<path d="M1212.6 229.4v-.600q0 -1.600 1.600 -1.600h8.1q1.600 0 1.600 1.600v.600" stroke="#8e8e8e" stroke-width="1"/><path d="M1212.6 240.6v.600q0 1.600 1.600 1.600h8.1q1.600 0 1.600 -1.600v-.600" stroke="#8e8e8e" stroke-width="1"/><text x="1209.700" y="240.3" font-family="Liberation Sans, sans-serif" font-weight="bold" font-size="14.500" fill="#dcdcdc" textLength="16.800" lengthAdjust="spacingAndGlyphs">1.11</text>
<path d="M1211.400 255.2l7.600 7.600M1219 255.2l-7.600 7.600" stroke="#dcdcdc" stroke-width="2.100"/><path d="M1213.800 264.2l3.800 4.100 6.700-7.500" stroke="#dcdcdc" stroke-width="2"/>
<text x="1209.700" y="294.6" font-family="Liberation Sans, sans-serif" font-weight="bold" font-size="14.500" fill="#dcdcdc" textLength="16.800" lengthAdjust="spacingAndGlyphs">1.11</text>
<path d="M1196.8 317.6l6.500 3.100-6.500 3.100-6.500-3.100z" fill="#e2e2e2" stroke="#2b2b2b" stroke-width=".500"/><path d="M1196.8 314.5l6.500 3.100-6.500 3.100-6.500-3.100z" fill="#d6d6d6" stroke="#2b2b2b" stroke-width=".500"/><path d="M1199.2 311.5l6.500 3.100-6.500 3.100-6.500-3.100z" fill="#8c8c8c" stroke="#2b2b2b" stroke-width=".500"/><path d="M1196.8 308.3l6.500 3.100-6.500 3.100-6.500-3.100z" fill="#e4e4e4" stroke="#2b2b2b" stroke-width=".500"/>
<path d="M1213.500 338.4h9.300l-3.600 4.600 3.600 4.600h-9.300z" stroke="#dcdcdc" stroke-width="1.600" stroke-linejoin="round"/><circle cx="1213.5" cy="338.4" r="1.500" fill="#2b2b2b" stroke="#dcdcdc" stroke-width="1"/><circle cx="1222.8" cy="338.4" r="1.500" fill="#2b2b2b" stroke="#dcdcdc" stroke-width="1"/><circle cx="1213.5" cy="347.6" r="1.500" fill="#2b2b2b" stroke="#dcdcdc" stroke-width="1"/><circle cx="1222.8" cy="347.6" r="1.500" fill="#2b2b2b" stroke="#dcdcdc" stroke-width="1"/>
<rect x="1212.600" y="364.9" width="11.200" height="11.200" rx="1.200" stroke="#dcdcdc" stroke-width="1.300"/>
<path d="M1211.400 390.2l7.600 7.600M1219 390.2l-7.600 7.600" stroke="#dcdcdc" stroke-width="2.100"/><path d="M1213.800 399.2l3.800 4.100 6.700-7.500" stroke="#dcdcdc" stroke-width="2"/>
<text x="1209.700" y="429.6" font-family="Liberation Sans, sans-serif" font-weight="bold" font-size="14.500" fill="#dcdcdc" textLength="16.800" lengthAdjust="spacingAndGlyphs">1.11</text>
<path d="M1196.8 452.6l6.500 3.100-6.500 3.100-6.500-3.100z" fill="#e2e2e2" stroke="#2b2b2b" stroke-width=".500"/><path d="M1196.8 449.5l6.500 3.100-6.500 3.100-6.500-3.100z" fill="#d6d6d6" stroke="#2b2b2b" stroke-width=".500"/><path d="M1199.2 446.5l6.500 3.100-6.500 3.100-6.500-3.100z" fill="#8c8c8c" stroke="#2b2b2b" stroke-width=".500"/><path d="M1196.8 443.3l6.500 3.100-6.500 3.100-6.500-3.100z" fill="#e4e4e4" stroke="#2b2b2b" stroke-width=".500"/>
<path d="M1196.8 479.6l6.500 3.100-6.500 3.100-6.500-3.100z" fill="#e2e2e2" stroke="#2b2b2b" stroke-width=".500"/><path d="M1196.8 476.5l6.500 3.100-6.500 3.100-6.500-3.100z" fill="#d6d6d6" stroke="#2b2b2b" stroke-width=".500"/><path d="M1199.2 473.5l6.500 3.100-6.500 3.100-6.500-3.100z" fill="#8c8c8c" stroke="#2b2b2b" stroke-width=".500"/><path d="M1196.8 470.3l6.500 3.100-6.500 3.100-6.500-3.100z" fill="#e4e4e4" stroke="#2b2b2b" stroke-width=".500"/>
<path d="M1196.8 506.6l6.500 3.100-6.500 3.100-6.500-3.100z" fill="#e2e2e2" stroke="#2b2b2b" stroke-width=".500"/><path d="M1196.8 503.5l6.500 3.100-6.500 3.100-6.500-3.100z" fill="#d6d6d6" stroke="#2b2b2b" stroke-width=".500"/><path d="M1199.2 500.5l6.500 3.100-6.500 3.100-6.500-3.100z" fill="#8c8c8c" stroke="#2b2b2b" stroke-width=".500"/><path d="M1196.8 497.3l6.500 3.100-6.500 3.100-6.500-3.100z" fill="#e4e4e4" stroke="#2b2b2b" stroke-width=".500"/>
<path d="M1196.8 533.6l6.500 3.100-6.500 3.100-6.500-3.100z" fill="#e2e2e2" stroke="#2b2b2b" stroke-width=".500"/><path d="M1196.8 530.5l6.500 3.100-6.500 3.100-6.500-3.100z" fill="#d6d6d6" stroke="#2b2b2b" stroke-width=".500"/><path d="M1199.2 527.5l6.500 3.100-6.500 3.100-6.500-3.100z" fill="#8c8c8c" stroke="#2b2b2b" stroke-width=".500"/><path d="M1196.8 524.3l6.500 3.100-6.500 3.100-6.500-3.100z" fill="#e4e4e4" stroke="#2b2b2b" stroke-width=".500"/>
<path d="M1192.400 564.6L1203.500 553.6" stroke="#d2d2d2" stroke-width="1.500" stroke-linecap="round"/>
<path d="M1192.400 591.6L1203.500 580.6" stroke="#d2d2d2" stroke-width="1.500" stroke-linecap="round"/>
<path d="M1196.200 606.4L1192.200 619.0H1205.200" stroke="#9db9d8" stroke-width="1.400" stroke-linejoin="round"/><path d="M1194.400 614.2q3.200 .6 3.600 4" stroke="#9db9d8" stroke-width="1"/><circle cx="1201.300" cy="614.8" r="1.700" stroke="#9db9d8" stroke-width="1"/><circle cx="1196.600" cy="615.4" r=".7" fill="#9db9d8"/>
<g opacity=".8">
<path d="M1505 556.700H1523" stroke="#8cc63f" stroke-width="1.600" stroke-dasharray="1 2"/>
<path d="M1500.300 554.700l2.600 2-2.600 2" stroke="#8cc63f" stroke-width="1.100"/>
<path d="M1505 584H1516" stroke="#7eaadc" stroke-width="1.600" stroke-dasharray="1 2"/>
<path d="M1516 584V611" stroke="#7eaadc" stroke-width="1.600" stroke-dasharray="1 1.700"/>
<path d="M1500.300 582l2.600 2-2.600 2" stroke="#7eaadc" stroke-width="1.100"/>
<path d="M1502 607H1523" stroke="#8cc63f" stroke-width="1.600" stroke-dasharray="1 2"/>
<path d="M1502 610.800H1516" stroke="#7eaadc" stroke-width="1.600" stroke-dasharray="1 2"/>
</g>
</svg>
<div class="t nm" id="n0" style="left:1212px;top:66.5px">矩形定位</div>
<div class="more" style="left:1353px;top:64.8px"><i style="left:9.200px"></i><i style="left:12.800px"></i><i style="left:16.400px"></i></div>
<div class="t nm" id="n1" style="left:1232px;top:93.5px">矩形中心</div>
<div class="t vv" id="v1" style="left:1356.6px;top:93.5px;transform:scaleX(0.8994);transform-origin:0 0"><span class="l" style="letter-spacing:0px">Size = 1</span></div>
<div class="t nm" id="n2" style="left:1232px;top:120.5px">矩形高度</div>
<div class="t vv" id="v2" style="left:1356.6px;top:120.5px;transform:scaleX(0.9362);transform-origin:0 0"><span class="l" style="letter-spacing:0px">765.741</span></div>
<div class="t nm" id="n3" style="left:1232px;top:147.5px">矩形宽度</div>
<div class="t vv" id="v3" style="left:1357.4px;top:147.5px;transform:scaleX(0.9382);transform-origin:0 0"><span class="l" style="letter-spacing:0px">743.223</span></div>
<div class="t nm" id="n4" style="left:1232px;top:174.5px">矩形角度</div>
<div class="t vv" id="v4" style="left:1357.4px;top:174.5px;transform:scaleX(0.95);transform-origin:0 0"><span class="l" style="letter-spacing:0px">89.727</span></div>
<div class="t nm" id="n5" style="left:1232px;top:201.5px">定位轮廓</div>
<div class="t vv" id="v5" style="left:1356.6px;top:201.5px;transform:scaleX(0.8994);transform-origin:0 0"><span class="l" style="letter-spacing:0px">Size = 1</span></div>
<div class="t nm" id="n6" style="left:1232px;top:228.5px">定位分数</div>
<div class="t vv" id="v6" style="left:1357.4px;top:228.5px;transform:scaleX(0.9406);transform-origin:0 0"><span class="l" style="letter-spacing:0px">0.658</span></div>
<div class="t nm" id="n7" style="left:1232px;top:255.5px">执行结果</div>
<div class="t vv" id="v7" style="left:1357.8px;top:255.5px;transform:scaleX(0.8267);transform-origin:0 0"><span class="l" style="letter-spacing:0px">TRUE</span></div>
<div class="t nm" id="n8" style="left:1232px;top:282.5px">执行时间</div>
<div class="t vv" id="v8" style="left:1357.8px;top:282.5px;transform:scaleX(0.9371);transform-origin:0 0"><span class="l" style="letter-spacing:0px">51.772</span></div>
<div class="t nm" id="n9" style="left:1212px;top:309.5px">索引</div>
<div class="t vv g" id="v9" style="left:1356.6px;top:309.5px">结果<span class="l" style="letter-spacing:-0.3px">(</span>多边形<span class="l" style="letter-spacing:-0.3px">) = 4 PNT...</span></div>
<div class="t nm" id="n10" style="left:1232px;top:336.5px">结果<span class="l">(</span>多边形<span class="l">)</span></div>
<div class="t vv" id="v10" style="left:1357.4px;top:336.5px;transform:scaleX(0.8817);transform-origin:0 0"><span class="l" style="letter-spacing:0px">4 PNT</span></div>
<div class="t nm" id="n11" style="left:1232px;top:363.5px">结果<span class="l">(</span>矩形<span class="l">)</span></div>
<div class="t vv" id="v11" style="left:1357.4px;top:363.5px;transform:scaleX(0.8817);transform-origin:0 0"><span class="l" style="letter-spacing:0px">4 PNT</span></div>
<div class="t nm" id="n12" style="left:1232px;top:390.5px">执行结果</div>
<div class="t vv" id="v12" style="left:1357.8px;top:390.5px;transform:scaleX(0.8267);transform-origin:0 0"><span class="l" style="letter-spacing:0px">TRUE</span></div>
<div class="t nm" id="n13" style="left:1232px;top:417.5px">执行时间</div>
<div class="t vv" id="v13" style="left:1357.4px;top:417.5px;transform:scaleX(0.8908);transform-origin:0 0"><span class="l" style="letter-spacing:0px">0.051</span></div>
<div class="t nm" id="n14" style="left:1212px;top:444.5px">索引<span class="l"><span class="u">_</span>2</span></div>
<div class="t vv g" id="v14" style="left:1356.6px;top:444.5px;transform:scaleX(0.9497);transform-origin:0 0"><span class="l" style="letter-spacing:0px">(69.174, 65.207)</span></div>
<div class="t nm" id="n15" style="left:1212px;top:471.5px">索引<span class="l"><span class="u">_</span>3</span></div>
<div class="t vv g" id="v15" style="left:1356.6px;top:471.5px;transform:scaleX(0.9481);transform-origin:0 0"><span class="l" style="letter-spacing:0px">(822.147, 64.455)</span></div>
<div class="t nm" id="n16" style="left:1212px;top:498.5px">索引<span class="l"><span class="u">_</span>4</span></div>
<div class="t vv g" id="v16" style="left:1356.6px;top:498.5px;transform:scaleX(0.9466);transform-origin:0 0"><span class="l" style="letter-spacing:0px">(823.372, 816.369)</span></div>
<div class="t nm" id="n17" style="left:1212px;top:525.5px">索引<span class="l"><span class="u">_</span>5</span></div>
<div class="t vv g" id="v17" style="left:1356.6px;top:525.5px;transform:scaleX(0.9481);transform-origin:0 0"><span class="l" style="letter-spacing:0px">(70.979, 819.441)</span></div>
<div class="t nm" id="n18" style="left:1212px;top:552.5px">线</div>
<div class="more" style="left:1353px;top:550.8px"><i style="left:9.200px"></i><i style="left:12.800px"></i><i style="left:16.400px"></i></div>
<div class="t vv g" id="v18" style="left:1386.2px;top:552.5px;transform:scaleX(0.9496);transform-origin:0 0"><span class="l" style="letter-spacing:0px">179.94° (69.174,...</span></div>
<div class="t nm" id="n19" style="left:1212px;top:579.5px">线<span class="l"><span class="u">_</span>2</span></div>
<div class="more" style="left:1353px;top:577.8px"><i style="left:9.200px"></i><i style="left:12.800px"></i><i style="left:16.400px"></i></div>
<div class="t vv g" id="v19" style="left:1387.8px;top:579.5px;transform:scaleX(0.9529);transform-origin:0 0"><span class="l" style="letter-spacing:0px">-90.09° (822.14...</span></div>
<div class="t nm" id="n20" style="left:1212px;top:606.5px">线到线的角度</div>
<div class="t vv g" id="v20" style="left:1356.6px;top:606.5px;transform:scaleX(0.989);transform-origin:0 0"><span class="l" style="letter-spacing:0px">90.04°</span></div>

<!-- status -->
<div id="statusbar" class="abs"></div>
<div class="sdiv" style="left:126px"></div>
<div class="sdiv" style="left:333px"></div>
<div class="sdiv" style="left:377px"></div>
</body>
</html>
